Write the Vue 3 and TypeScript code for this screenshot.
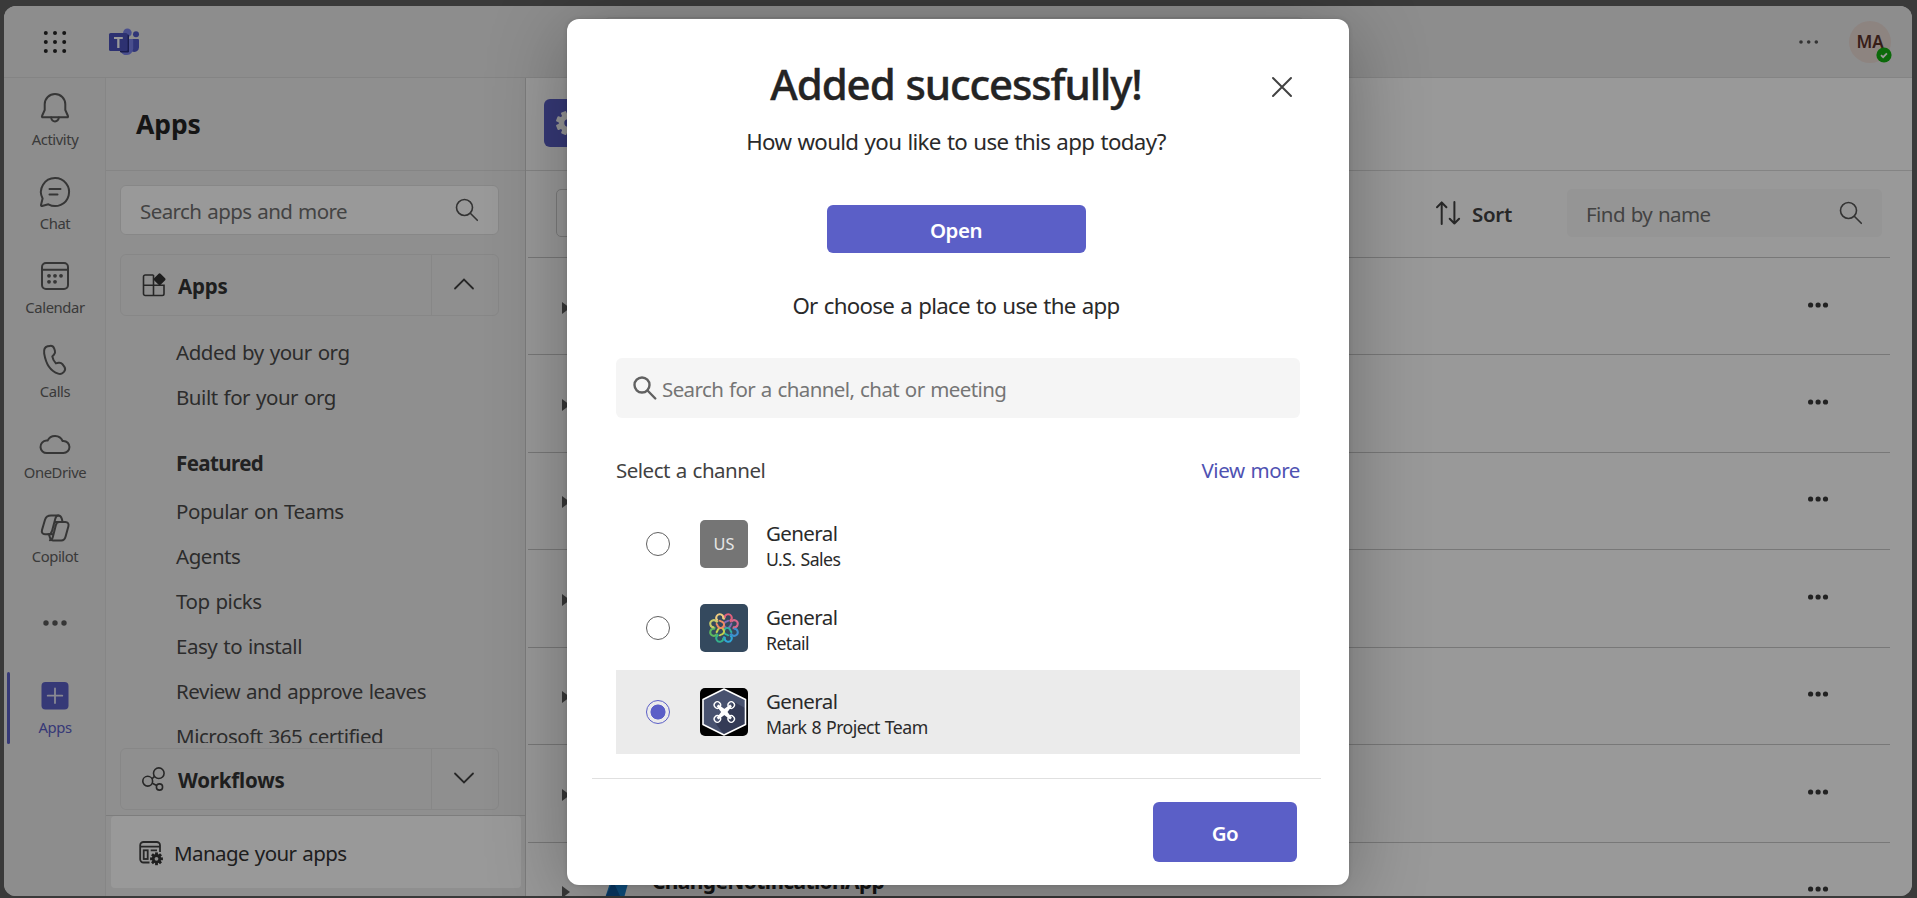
<script setup lang="ts">
import { ref } from 'vue'

interface RailItem { id: string; label: string; tight?: boolean }
interface Channel { id: string; name: string; team: string; cls: string }

const rail: RailItem[] = [
  { id: 'activity', label: 'Activity' },
  { id: 'chat', label: 'Chat' },
  { id: 'calendar', label: 'Calendar' },
  { id: 'calls', label: 'Calls' },
  { id: 'onedrive', label: 'OneDrive', tight: true },
  { id: 'copilot', label: 'Copilot', tight: true },
]

const orgLinks: string[] = ['Added by your org', 'Built for your org']
const featured: string[] = [
  'Popular on Teams',
  'Agents',
  'Top picks',
  'Easy to install',
  'Review and approve leaves',
  'Microsoft 365 certified',
]

const channels: Channel[] = [
  { id: 'us', name: 'General', team: 'U.S. Sales', cls: 't-us' },
  { id: 'retail', name: 'General', team: 'Retail', cls: 't-retail' },
  { id: 'mark8', name: 'General', team: 'Mark 8 Project Team', cls: 't-mark8' },
]
const selected = ref<string>('mark8')

const lobes: string[] = ['#e0607c', '#d8688c', '#3f8fd0', '#2fa6d8', '#35b08c', '#5cb860', '#c8cc68', '#f0cc80']
const innerLoops: string[] = ['#8468b4', '#2fae9e', '#c2cf4e', '#ee8a62']
const gearTeeth: number[] = [0, 45, 90, 135, 180, 225, 270, 315]
const arms: number[] = [45, 135, 225, 315]
</script>

<template>
  <div class="desktop">
    <div class="window">
      <header class="topbar">
        <svg class="waffle" viewBox="0 0 24 24">
          <template v-for="y in 3" :key="y">
            <circle v-for="x in 3" :key="x" :cx="x * 9.2 - 6.4" :cy="y * 9 - 6" r="2" fill="#242424" />
          </template>
        </svg>
        <svg class="logo" viewBox="0 0 30 28">
          <circle cx="18.4" cy="4.8" r="4.3" fill="#7b83eb" />
          <circle cx="27" cy="6.300" r="3" fill="#5059c9" />
          <path d="M22.500 11H29a1 1 0 0 1 1 1v7.500a4.600 4.600 0 0 1-7.500 3.500z" fill="#5059c9" />
          <path d="M11 11h12.200a1 1 0 0 1 1 1v8.600a6.700 6.700 0 0 1-13.200 1.400z" fill="#7b83eb" />
          <rect x="11" y="6.500" width="9" height="18" rx="1.200" fill="#2b3080" />
          <rect x="0" y="5" width="18.600" height="18" rx="1.600" fill="#4b53bc" />
          <path d="M5 8.900h8.800v2H10.500v9h-2.300v-9H5z" fill="#fff" />
        </svg>
        <div class="topsearch"></div>
        <div class="topright">
          <svg class="more" viewBox="0 0 20 6"><circle cx="2" cy="3" r="1.8" /><circle cx="9.7" cy="3" r="1.8" /><circle cx="17.3" cy="3" r="1.8" /></svg>
          <div class="me">
            <span class="initials">MA</span>
            <svg class="presence" viewBox="0 0 16 16"><circle cx="8" cy="8" r="7.6" fill="#13b010" /><path d="M5 8.200l2.100 2 3.800-3.800" fill="none" stroke="#fff" stroke-width="1.8" /></svg>
          </div>
        </div>
      </header>

      <div class="body">
        <nav class="rail">
          <div v-for="it in rail" :key="it.id" class="rail-item" :class="{ tight: it.tight }">
            <svg class="rail-icon" viewBox="0 0 30 30">
              <g v-if="it.id === 'activity'">
                <path d="M15 1a10.300 10.300 0 0 1 10.300 10.300V17l2.700 6a.9.9 0 0 1-.8 1.300H2.800A.9.9 0 0 1 2 23l2.700-6v-5.700A10.300 10.300 0 0 1 15 1z" />
                <path d="M11.200 24.600a3.800 3.800 0 0 0 7.600 0" />
              </g>
              <g v-else-if="it.id === 'chat'">
                <path d="M15 1a14 14 0 1 1-6.600 26.300L2 29a.9.900 0 0 1-1-1l1.600-6.500A14 14 0 0 1 15 1z" />
                <path d="M9.500 12h11M9.500 17.500h8" />
              </g>
              <g v-else-if="it.id === 'calendar'">
                <rect x="2" y="2" width="26" height="26" rx="4" />
                <path d="M2 8.800h26" />
                <g class="dots"><circle cx="9" cy="14.800" r="1.900" /><circle cx="15" cy="14.800" r="1.900" /><circle cx="21" cy="14.800" r="1.900" /><circle cx="9" cy="20.800" r="1.900" /><circle cx="15" cy="20.800" r="1.900" /></g>
              </g>
              <g v-else-if="it.id === 'calls'">
                <path d="M7.600 1.300l2.400-.4a3.900 3.900 0 0 1 4.100 2.400l.8 2.500a4 4 0 0 1-1 4l-1.600 1.600c.4 2.800 1.700 4.900 3.600 7l2.600-.6a3.900 3.900 0 0 1 3.900 1.400l2 2.700a3.900 3.900 0 0 1-.3 4.700l-1 1a4.600 4.600 0 0 1-4.900 1C10.800 26.300 6 19.500 4.200 8.600 3.700 5 4.600 2.100 7.600 1.300z" />
              </g>
              <g v-else-if="it.id === 'onedrive'">
                <path d="M7 24a6.200 6.200 0 0 1-.6-12.400h1.200A8.200 8.200 0 0 1 22.600 12h.9A6 6 0 0 1 23.400 24z" />
              </g>
              <g v-else>
                <path d="M11 2.500h7.500c2 0 2.700 1.200 3.300 3.300l.8 3.200h2.700c2.700 0 3.700 2 3.100 4.200l-2.800 10.300c-.7 2.600-2 4-4.300 4H13.200c-2 0-2.700-1-3.300-3l-.9-3.200H5c-2.600 0-3.600-2-3-4.200L5 6.700C5.900 3.700 7.500 2.500 11 2.500z" />
                <path d="M18.500 2.500c-1.800 0-2.700 1.300-3.200 3.200l-3.200 12c-.6 2.200-1.200 3.600-3.800 3.600M22.600 9h-3.400c-2 0-2.900 1.200-3.400 3.200l-2.900 11.600c-.5 2-1.500 3.200-3 3.500M14.600 9h4.600M9 21.300h4.600" />
              </g>
            </svg>
            <span class="rail-label">{{ it.label }}</span>
          </div>
          <div class="rail-more">
            <svg viewBox="0 0 24 6"><circle cx="3" cy="3" r="2.700" /><circle cx="12" cy="3" r="2.700" /><circle cx="21" cy="3" r="2.700" /></svg>
          </div>
          <div class="rail-item active">
            <svg class="rail-icon" viewBox="0 0 30 30">
              <rect class="solid" x="1.500" y="1" width="27" height="27.500" rx="4" />
              <path class="plus" d="M15 7.500v14.500M7.700 14.700h14.600" />
            </svg>
            <span class="rail-label">Apps</span>
          </div>
        </nav>

        <aside class="panel">
          <div class="panel-head"><h2>Apps</h2></div>
          <div class="panel-search">
            <span>Search apps and more</span>
            <svg class="glass" viewBox="0 0 24 24"><circle cx="9.500" cy="9.500" r="8" /><path d="M15.300 15.300l7 7" /></svg>
          </div>
          <div class="group">
            <div class="group-main">
              <svg class="group-icon" viewBox="0 0 24 24">
                <path d="M11.500 2H3.200A1.700 1.700 0 0 0 1.500 3.700v17.100a1.700 1.700 0 0 0 1.700 1.700h17.100a1.700 1.700 0 0 0 1.700-1.700v-8.500H1.500M11.500 2v20.500" />
                <rect x="13" y="1.700" width="9.200" height="9.200" rx="1.400" transform="rotate(45 17.600 6.300)" class="fill" />
              </svg>
              <span>Apps</span>
            </div>
            <div class="group-toggle"><svg viewBox="0 0 20 12"><path d="M1 10.500L10 1.500l9 9" /></svg></div>
          </div>
          <div class="links">
            <div v-for="l in orgLinks" :key="l" class="link">{{ l }}</div>
            <div class="link heading">Featured</div>
            <div v-for="l in featured" :key="l" class="link">{{ l }}</div>
          </div>
          <div class="group">
            <div class="group-main">
              <svg class="group-icon" viewBox="0 0 24 24">
                <circle cx="5.700" cy="14.200" r="4.900" /><circle cx="16.800" cy="6.200" r="5.300" /><circle cx="17.500" cy="20" r="3.100" />
                <path d="M9.900 11.800l2.400-2.100M10.300 16.200l4.400 2.300" />
              </svg>
              <span>Workflows</span>
            </div>
            <div class="group-toggle"><svg viewBox="0 0 20 12"><path d="M1 1.500l9 9 9-9" /></svg></div>
          </div>
          <div class="manage-wrap">
            <div class="manage">
              <svg class="manage-icon" viewBox="0 0 24 24">
                <path d="M10.500 21.500H4.500A3.300 3.300 0 0 1 1.200 18.200V4.300A3.300 3.300 0 0 1 4.500 1h13.200A3.300 3.300 0 0 1 21 4.300V11M1.200 5.700H21M11.700 9.300h6.300" />
                <rect x="4.700" y="9.300" width="4" height="8.700" />
                <g transform="translate(17.500 17.800)">
                  <rect v-for="a in gearTeeth" :key="a" class="fill" x="-1.400" y="-6.400" width="2.800" height="4" :transform="`rotate(${a})`" />
                  <circle r="3.300" class="ring" />
                </g>
              </svg>
              <span>Manage your apps</span>
            </div>
          </div>
        </aside>

        <main class="main">
          <div class="main-head">
            <div class="app-tile">
              <svg viewBox="-14 -14 28 28">
                <rect v-for="a in gearTeeth" :key="a" x="-3" y="-13" width="6" height="7" rx="1" fill="#fff" :transform="`rotate(${a + 22})`" />
                <circle r="7" fill="none" stroke="#fff" stroke-width="6" />
              </svg>
            </div>
          </div>
          <div class="toolbar">
            <div class="filter"></div>
            <div class="sort">
              <svg viewBox="0 0 24 24"><path d="M5.700 23V1.500M1 6.300l4.700-4.800 4.700 4.800M18.400 1v21.500M13.700 17.700l4.700 4.800 4.700-4.800" /></svg>
              <span>Sort</span>
            </div>
            <div class="find">
              <span>Find by name</span>
              <svg class="glass" viewBox="0 0 24 24"><circle cx="9.500" cy="9.500" r="8" /><path d="M15.300 15.300l7 7" /></svg>
            </div>
          </div>
          <div v-for="n in 7" :key="n" class="row">
            <span class="caret"></span>
            <svg v-if="n === 7" class="row-logo" viewBox="0 0 24 24"><path d="M8 0h14l2 6-5 18H0z" fill="#1a86d8" /><path d="M8 7L16 24H0z" fill="#125fa8" /></svg>
            <span v-if="n === 7" class="row-name">ChangeNotificationApp</span>
            <svg class="row-more" viewBox="0 0 20 6"><circle cx="2.600" cy="3" r="2.600" /><circle cx="10.100" cy="3" r="2.600" /><circle cx="17.500" cy="3" r="2.600" /></svg>
          </div>
        </main>
      </div>
    </div>

    <div class="overlay">
      <div class="dialog" role="dialog">
        <svg class="close" viewBox="0 0 20 20"><path d="M1 1l18 18M19 1L1 19" /></svg>
        <div class="intro">
          <h1>Added successfully!</h1>
          <p class="sub">How would you like to use this app today?</p>
          <button class="btn open">Open</button>
          <p class="or">Or choose a place to use the app</p>
        </div>
        <div class="search">
          <svg viewBox="0 0 24 24"><circle cx="9" cy="9" r="7.500" /><path d="M14.500 14.500l7.800 8" /></svg>
          <span>Search for a channel, chat or meeting</span>
        </div>
        <div class="select-head"><span>Select a channel</span><a>View more</a></div>
        <div class="channels">
          <div
            v-for="c in channels"
            :key="c.id"
            class="channel"
            :class="{ on: selected === c.id }"
            @click="selected = c.id"
          >
            <span class="radio"></span>
            <div class="tile" :class="c.cls">
              <span v-if="c.id === 'us'">US</span>
              <svg v-else-if="c.id === 'retail'" viewBox="-24 -24 48 48">
                <g v-for="(color, i) in innerLoops" :key="color" :transform="`rotate(${i * 90 + 45})`">
                  <path d="M-2.600 -9C-1.500 -7.600 -3.300 -6.600 -3.300 -4.600A3.300 3.300 0 0 0 3.300 -4.600C3.300 -6.600 1.500 -7.600 2.600 -9" fill="none" :stroke="color" stroke-width="2" />
                </g>
                <g v-for="(color, i) in lobes" :key="color" :transform="`rotate(${i * 45 + 22.5})`">
                  <path d="M-3 -9.300A3.500 3.500 0 1 1 3 -9.300Q3.400 -8.400 4.500 -8.700" fill="none" :stroke="color" stroke-width="2" />
                </g>
              </svg>
              <svg v-else viewBox="0 0 48 48">
                <path d="M24 1L45.500 11.500V36.500L24 47 3 36.500V11.500z" fill="#48526f" />
                <path d="M34 14L45 20V36.500L24 46.500 16 36z" fill="#343b56" />
                <path d="M24 1L45.500 11.500V36.500L24 47 3 36.500V11.500z" fill="none" stroke="#fff" stroke-width="1.600" stroke-linejoin="round" />
                <g transform="translate(24.300 24)">
                  <g v-for="a in arms" :key="a" :transform="`rotate(${a})`">
                    <path d="M-2.600 0L-1.200 -9.500H1.200L2.600 0z" fill="#fff" />
                    <circle cy="-9.800" r="3.200" fill="none" stroke="#fff" stroke-width="1.300" />
                  </g>
                </g>
              </svg>
            </div>
            <div class="names">
              <div class="name">{{ c.name }}</div>
              <div class="team">{{ c.team }}</div>
            </div>
          </div>
        </div>
        <div class="foot"><button class="btn go">Go</button></div>
      </div>
    </div>
  </div>
</template>

<style>
body { margin: 0; overflow: hidden; }
</style>

<style scoped>
* { box-sizing: border-box; }
.desktop {
  position: relative; width: 1917px; height: 898px; overflow: hidden; padding: 6px 5px 2px 4px;
  background: #626262; color: #424242;
  font-family: "Noto Sans", "Open Sans", sans-serif; font-size: 20.5px; letter-spacing: -0.57px; word-spacing: 1px;
}
.window { height: 890px; border-radius: 12px; overflow: hidden; background: #fff; display: flex; flex-direction: column; }
svg { display: block; flex: none; overflow: visible; }
span { white-space: nowrap; }

.topbar { height: 72px; flex: none; background: #ebebeb; border-bottom: 1px solid #dcdcdc; display: flex; align-items: center; padding: 0 21px 0 39px; }
.waffle { width: 24px; height: 24px; }
.logo { width: 30px; height: 28px; margin-left: 42px; }
.topsearch { width: 700px; height: 48px; margin-left: 465px; border: 1px solid #dcdcdc; border-radius: 6px; align-self: flex-start; margin-top: 11px; }
.topright { display: flex; align-items: center; margin-left: auto; }
.more { width: 20px; height: 6px; fill: #555; margin-right: 30px; }
.me { position: relative; width: 42px; height: 42px; border-radius: 50%; background: #ecdcd6; display: flex; align-items: center; justify-content: center; }
.initials { font-size: 17px; font-weight: 600; color: #5c332a; letter-spacing: -0.2px; }
.presence { position: absolute; right: -1px; bottom: 0; width: 16px; height: 16px; border-radius: 50%; }

.body { flex: 1; min-height: 0; display: flex; }
.rail { width: 102px; flex: none; background: #ebebeb; border-right: 1px solid #e0e0e0; }
.rail-item { height: 84px; padding-top: 15px; display: flex; flex-direction: column; align-items: center; gap: 6px; color: #616161; position: relative; }
.rail-item.tight { gap: 3px; }
.rail-icon { width: 30px; height: 30px; fill: none; stroke: #5a5a5a; stroke-width: 2; stroke-linecap: round; stroke-linejoin: round; }
.dots { fill: #5a5a5a; stroke: none; }
.rail-label { font-size: 14.8px; line-height: 20px; letter-spacing: -0.4px; padding-left: 1px; }
.rail-more { height: 90px; padding-top: 38px; display: flex; justify-content: center; }
.rail-more svg { width: 24px; height: 6px; fill: #5a5a5a; }
.rail-item.active { height: 72px; padding-top: 9px; color: #5b5fc7; }
.rail-item.active::before { content: ""; position: absolute; left: 3px; top: 0; width: 3px; height: 72px; border-radius: 2px; background: #5b5fc7; }
.solid { fill: #5b5fc7; stroke: none; }
.plus { stroke: #e4e4f4; stroke-width: 1.8; }

.panel { width: 420px; flex: none; background: #efefef; border-right: 1px solid #d0d0d0; display: flex; flex-direction: column; }
.panel-head { height: 93px; flex: none; border-bottom: 1px solid #dedede; padding-left: 30px; display: flex; align-items: center; }
.panel-head h2 { margin: 0; font-size: 26.5px; line-height: 36px; font-weight: 700; color: #242424; letter-spacing: -0.1px; }
.panel-search { flex: none; margin: 14px 26px 0 14px; width: 379px; height: 50px; background: #fff; border: 1px solid #e2e2e2; border-radius: 6px; padding: 1px 19px 0 19px; display: flex; align-items: center; justify-content: space-between; color: #707070; }
.glass { width: 24px; height: 24px; fill: none; stroke: #555; stroke-width: 1.6; stroke-linecap: round; margin-top: -2px; }
.group { flex: none; margin: 19px 0 0 14px; width: 379px; height: 62px; border: 1px solid #e2e2e2; border-radius: 6px; display: flex; }
.group-main { flex: 1; display: flex; align-items: center; padding-left: 21px; gap: 12px; font-weight: 700; color: #333; letter-spacing: -0.2px; }
.group-main span { padding-top: 2px; }
.group-icon { width: 24px; height: 24px; fill: none; stroke: #424242; stroke-width: 1.6; }
.fill { fill: #333; stroke: none; }
.group-toggle { width: 67px; border-left: 1px solid #e2e2e2; display: flex; align-items: center; justify-content: center; padding-right: 2px; }
.group-toggle svg { width: 20px; height: 12px; fill: none; stroke: #424242; stroke-width: 1.8; stroke-linecap: round; margin-top: -2px; }
.links { flex: 1; min-height: 0; overflow: hidden; padding: 14px 0 0 70px; }
.links + .group { margin-top: 5px; }
.link { height: 45px; line-height: 45px; white-space: nowrap; color: #4a4a4a; letter-spacing: -0.46px; }
.heading { font-weight: 700; color: #3a3a3a; margin: 21px 0 3px; letter-spacing: -0.6px; }
.manage-wrap { flex: none; margin-top: 5px; border-top: 1px solid #d0d0d0; padding: 0 4px 8px 5px; }
.manage { height: 72px; background: #fff; border-radius: 4px; display: flex; align-items: center; padding: 2px 0 0 28px; gap: 11px; color: #333; }
.manage-icon { width: 24px; height: 24px; fill: none; stroke: #424242; stroke-width: 1.8; }
.ring { fill: #efefef; stroke: #333; stroke-width: 2.800; }

.main { flex: 1; min-width: 0; background: #fff; }
.main-head { height: 93px; border-bottom: 1px solid #dcdcdc; padding: 21px 0 0 18px; }
.app-tile { width: 48px; height: 48px; border-radius: 6px; background: #5b5fc7; display: flex; align-items: center; justify-content: center; }
.app-tile svg { width: 26px; height: 26px; }
.toolbar { margin: 0 22px 0 2px; height: 87px; border-bottom: 1px solid #c8c8c8; padding: 18px 8px 0 28px; display: flex; }
.filter { width: 120px; height: 48px; border: 1px solid #cfcfcf; border-radius: 5px; }
.sort { margin-left: auto; height: 48px; display: flex; align-items: center; gap: 12px; font-weight: 600; color: #424242; margin-right: 55px; letter-spacing: -0.3px; }
.sort svg { width: 24px; height: 24px; fill: none; stroke: #424242; stroke-width: 2; stroke-linecap: round; stroke-linejoin: round; }
.sort span { padding-top: 2px; }
.find { width: 315px; height: 48px; background: #f9f9f9; border-radius: 5px; padding: 2px 19px 0 19px; display: flex; align-items: center; justify-content: space-between; color: #707070; }
.row { height: 97.5px; margin: 0 22px 0 2px; border-bottom: 1px solid #c8c8c8; display: flex; position: relative; padding: 43.5px 62px 0 34px; }
.toolbar + .row { height: 97px; }
.caret { flex: none; border-left: 8px solid #606060; border-top: 6px solid transparent; border-bottom: 6px solid transparent; height: 0; }
.row-logo { width: 24px; height: 24px; margin: -12px 0 0 35px; }
.row-name { font-weight: 700; font-size: 21px; line-height: 28px; margin: -19px 0 0 23px; color: #242424; letter-spacing: -0.65px; }
.row-more { width: 20px; height: 6px; margin-left: auto; fill: #3a3a3a; }

.overlay { position: absolute; inset: 0; background: rgba(0, 0, 0, 0.4); padding: 19px 0 0 567px; }
.dialog { position: relative; width: 782px; height: 866px; border-radius: 12px; background: #fff; box-shadow: 0 12px 80px rgba(0, 0, 0, 0.3), 0 0 4px rgba(0, 0, 0, 0.15); padding: 37px 49px 0; color: #2a2a2a; }
.close { position: absolute; left: 705px; top: 58px; width: 20px; height: 20px; fill: none; stroke: #424242; stroke-width: 2; stroke-linecap: round; }
.intro { margin: 0 2px 0 -2px; }
h1 { margin: 0; font-size: 42px; line-height: 56px; font-weight: 500; text-align: center; color: #242424; letter-spacing: -1.1px; -webkit-text-stroke: 0.4px #242424; }
.sub, .or { font-size: 22.3px; line-height: 32px; text-align: center; position: relative; top: 1px; }
.sub { margin: 13px 0 0; letter-spacing: -0.65px; }
.or { margin: 36px 0 0; letter-spacing: -0.7px; }
.btn { display: block; border: 0; padding: 0; border-radius: 6px; background: #5b5fc7; color: #fff; font: inherit; font-weight: 600; letter-spacing: -0.5px; }
.open { width: 259px; height: 48px; margin: 48px auto 0; padding-top: 1px; }
.search { margin-top: 37px; height: 60px; width: 684px; background: #f5f5f5; border-radius: 6px; display: flex; align-items: center; padding: 2px 0 0 17px; gap: 5px; color: #757575; letter-spacing: -0.6px; }
.search svg { width: 24px; height: 24px; fill: none; stroke: #616161; stroke-width: 2.4; stroke-linecap: round; margin-top: -2px; }
.select-head { margin-top: 37px; display: flex; justify-content: space-between; line-height: 30px; color: #424242; letter-spacing: -0.5px; }
.select-head a { color: #4f52b2; letter-spacing: -0.42px; }
.channels { margin-top: 17px; }
.channel { height: 84px; display: flex; align-items: center; padding-left: 30px; }
.channel.on { background: #ebebeb; }
.radio { width: 24px; height: 24px; border: 1.500px solid #616161; border-radius: 50%; }
.on .radio { border-color: #5b5fc7; background: radial-gradient(circle, #5b5fc7 0 7.200px, transparent 7.800px); }
.tile { width: 48px; height: 48px; border-radius: 5px; margin-left: 30px; overflow: hidden; display: flex; align-items: center; justify-content: center; }
.tile svg { width: 48px; height: 48px; }
.t-us { background: #757575; color: #e6e6e6; font-size: 16.300px; letter-spacing: 0; }
.t-retail { background: #34495e; }
.t-mark8 { background: #000; }
.names { margin-left: 18px; padding-top: 2px; }
.name { line-height: 28px; letter-spacing: -0.6px; }
.team { font-size: 17.700px; line-height: 24px; letter-spacing: -0.57px; }
.foot { margin: 24px -21px 0 -24px; border-top: 1px solid #e0e0e0; padding-top: 23px; }
.go { width: 144px; height: 60px; margin: 0 24px 0 auto; padding-top: 1px; }
</style>
